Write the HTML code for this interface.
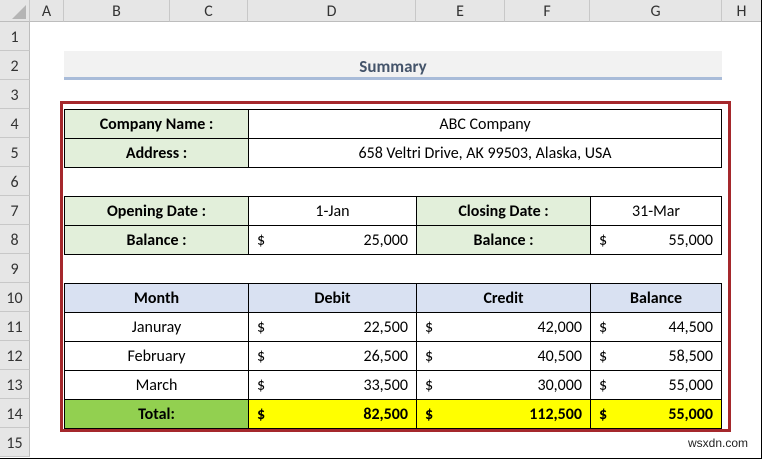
<!DOCTYPE html><html><head><style>
body{margin:0;width:762px;height:459px;overflow:hidden;background:#fff;font-family:Calibri,"Liberation Sans",sans-serif;font-size:16px;position:relative}
div{position:absolute;box-sizing:border-box}
.ch{top:0;height:22px;background:#e6e6e6;border-right:1px solid #c8c8c8;border-bottom:1px solid #bdbdbd;text-align:center;line-height:23px;color:#333;font-size:16px}
.rh{left:0;width:30px;height:29px;background:#e6e6e6;border-bottom:1px solid #c8c8c8;border-right:1px solid #bdbdbd;text-align:center;line-height:31px;color:#333}
.c{height:30px;border:1px solid #000;line-height:30px;text-align:center;color:#000}
.g{background:#e2efda;font-weight:bold}
.b{background:#d9e1f2;font-weight:bold}
.y{background:#ffff00;font-weight:bold}
.d{text-align:left;padding-left:8px}
.d span{position:absolute;right:8px}
</style></head><body>
<div class="ch" style="left:0;width:30px"><svg width="14" height="14" style="position:absolute;left:12px;top:5px"><polygon points="14,0 14,14 0,14" fill="#b5b5b5"/></svg></div>
<div class="ch" style="left:30px;width:34px">A</div>
<div class="ch" style="left:64px;width:106px">B</div>
<div class="ch" style="left:170px;width:78px">C</div>
<div class="ch" style="left:248px;width:168px">D</div>
<div class="ch" style="left:416px;width:89px">E</div>
<div class="ch" style="left:505px;width:85px">F</div>
<div class="ch" style="left:590px;width:132px">G</div>
<div class="ch" style="left:722px;width:40px">H</div>
<div class="rh" style="top:22px">1</div><div class="rh" style="top:51px">2</div><div class="rh" style="top:80px">3</div><div class="rh" style="top:109px">4</div><div class="rh" style="top:138px">5</div><div class="rh" style="top:167px">6</div><div class="rh" style="top:196px">7</div><div class="rh" style="top:225px">8</div><div class="rh" style="top:254px">9</div><div class="rh" style="top:283px">10</div><div class="rh" style="top:312px">11</div><div class="rh" style="top:341px">12</div><div class="rh" style="top:370px">13</div><div class="rh" style="top:399px">14</div><div class="rh" style="top:428px">15</div>
<div style="left:64px;top:51px;width:658px;height:29px;background:#f2f2f2;border-bottom:3px solid #a9bcd9;text-align:center;line-height:31px;font-weight:bold;color:#44546a;font-size:17px">Summary</div>
<div style="left:60px;top:101px;width:671px;height:331px;border:3px solid #a5282c"></div>
<div class="c g" style="left:64px;top:109px;width:185px">Company Name :</div>
<div class="c" style="left:248px;top:109px;width:474px">ABC Company</div>
<div class="c g" style="left:64px;top:138px;width:185px">Address :</div>
<div class="c" style="left:248px;top:138px;width:474px">658 Veltri Drive, AK 99503, Alaska, USA</div>
<div class="c g" style="left:64px;top:196px;width:185px">Opening Date :</div>
<div class="c" style="left:248px;top:196px;width:169px">1-Jan</div>
<div class="c g" style="left:416px;top:196px;width:175px">Closing Date :</div>
<div class="c" style="left:590px;top:196px;width:132px">31-Mar</div>
<div class="c g" style="left:64px;top:225px;width:185px">Balance :</div>
<div class="c d" style="left:248px;top:225px;width:169px">$<span>25,000</span></div>
<div class="c g" style="left:416px;top:225px;width:175px">Balance :</div>
<div class="c d" style="left:590px;top:225px;width:132px">$<span>55,000</span></div>
<div class="c b" style="left:64px;top:283px;width:185px">Month</div>
<div class="c b" style="left:248px;top:283px;width:169px">Debit</div>
<div class="c b" style="left:416px;top:283px;width:175px">Credit</div>
<div class="c b" style="left:590px;top:283px;width:132px">Balance</div>
<div class="c" style="left:64px;top:312px;width:185px">Januray</div>
<div class="c d" style="left:248px;top:312px;width:169px">$<span>22,500</span></div>
<div class="c d" style="left:416px;top:312px;width:175px">$<span>42,000</span></div>
<div class="c d" style="left:590px;top:312px;width:132px">$<span>44,500</span></div>
<div class="c" style="left:64px;top:341px;width:185px">February</div>
<div class="c d" style="left:248px;top:341px;width:169px">$<span>26,500</span></div>
<div class="c d" style="left:416px;top:341px;width:175px">$<span>40,500</span></div>
<div class="c d" style="left:590px;top:341px;width:132px">$<span>58,500</span></div>
<div class="c" style="left:64px;top:370px;width:185px">March</div>
<div class="c d" style="left:248px;top:370px;width:169px">$<span>33,500</span></div>
<div class="c d" style="left:416px;top:370px;width:175px">$<span>30,000</span></div>
<div class="c d" style="left:590px;top:370px;width:132px">$<span>55,000</span></div>
<div class="c" style="left:64px;top:399px;width:185px;background:#92d050;font-weight:bold">Total:</div>
<div class="c d y" style="left:248px;top:399px;width:169px">$<span>82,500</span></div>
<div class="c d y" style="left:416px;top:399px;width:175px">$<span>112,500</span></div>
<div class="c d y" style="left:590px;top:399px;width:132px">$<span>55,000</span></div>
<div style="left:688px;top:436px;font-family:'Liberation Sans',sans-serif;font-size:12px;color:#222">wsxdn.com</div>
<div style="left:0;top:0;width:762px;height:459px;border-right:1px solid #000;border-bottom:1px solid #000"></div>
</body></html>
